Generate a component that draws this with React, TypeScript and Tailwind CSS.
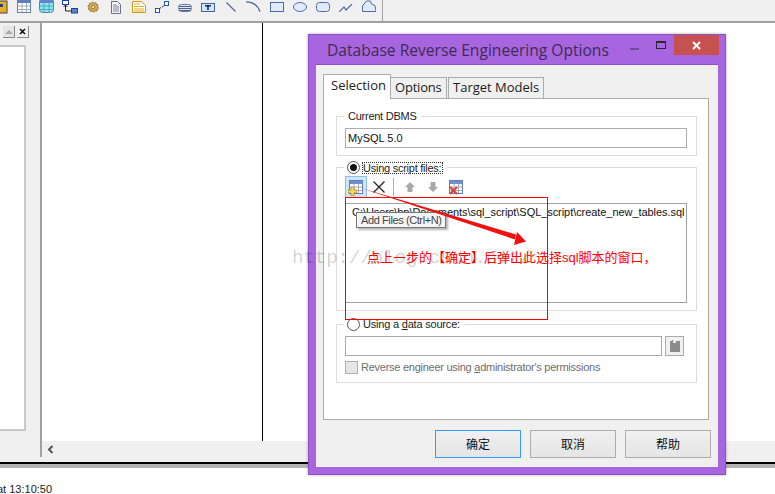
function TableIcon({ head = '#6f8fd0', fill = '#fff' }: { head?: string; fill?: string }) {
  return (
    <svg width="14" height="14" viewBox="0 0 14 14">
      <rect x="0.5" y="0.5" width="13" height="13" fill={fill} stroke="#5f7fb5" />
      <rect x="1" y="1" width="12" height="3" fill={head} />
      <path d="M1 7h12M1 10.500h12M5 4v9M9.500 4v9" stroke="#a8a8b8" />
    </svg>
  );
}

const slot = 'w-[23px] shrink-0 flex justify-center';

function ToolbarIcons() {
  return (
    <div className="flex items-start ml-[4px]">
      <div className={`${slot} pt-0`}>
        <svg width="14" height="13" viewBox="0 0 14 13">
          <rect x="0.500" y="-1" width="13" height="13.500" fill="#fff" stroke="#5f7fb5" />
          <rect x="1" y="0" width="12" height="3" fill="#5f7fc0" />
          <path d="M1 6h12M1 9.500h12M5 3v9M9.500 3v9" stroke="#a8a8b8" />
        </svg>
      </div>
      <div className={slot}>
        <svg width="15" height="13" viewBox="0 0 15 13">
          <rect x="0.500" y="-1" width="14" height="13.500" rx="3" fill="#8fe6ee" stroke="#5f7fb5" />
          <rect x="1" y="0" width="13" height="3" fill="#5f86cc" />
          <path d="M1 6h13M1 9.500h13M5 3v9M10 3v9" stroke="#4aa9c0" />
        </svg>
      </div>
      <div className={slot}>
        <svg width="16" height="14" viewBox="0 0 16 14">
          <rect x="0.500" y="0.500" width="6" height="4" fill="#fff" stroke="#1b3fb0" />
          <rect x="9.500" y="8.500" width="6" height="4.500" fill="#5f86cc" stroke="#1b3fb0" />
          <path d="M3.500 5v6h6M1.500 7l2-2 2 2" fill="none" stroke="#222" />
        </svg>
      </div>
      <div className={`${slot} pt-px`}>
        <svg width="12" height="12" viewBox="0 0 16 16">
          <path d="M8 1l1.600 2 2.400-.8.400 2.500 2.500.5-.9 2.400 1.600 1.900-2.200 1.300.2 2.500-2.500-.1L8.800 15 7 13.200 4.600 14l-.6-2.500-2.500-.6.9-2.400L1 6.600 3.200 5.400 3 2.900l2.500.1z" fill="#d8a84a" stroke="#8a6a30" />
          <circle cx="8" cy="8" r="2.200" fill="#f3e2b0" stroke="#8a6a30" />
        </svg>
      </div>
      <div className={`${slot} pt-px`}>
        <svg width="10" height="13" viewBox="0 0 10 13">
          <path d="M.5.500h6l3 3v9h-9z" fill="#f4f4f4" stroke="#66708a" />
          <path d="M2 4h4M2 6h6M2 8h6M2 10h6" stroke="#7a8398" />
        </svg>
      </div>
      <div className={`${slot} pt-px`}>
        <svg width="14" height="12" viewBox="0 0 14 12">
          <path d="M.5.500h9l4 4v7H.5z" fill="#fff" stroke="#c99a18" />
          <path d="M2 3h6M2 5.500h10M2 8h10M2 10h10" stroke="#e0ac14" />
        </svg>
      </div>
      <div className={`${slot} pt-px`}>
        <svg width="14" height="12" viewBox="0 0 14 12">
          <rect x="0.500" y="7.500" width="4" height="4" fill="#fff" stroke="#2b52b8" />
          <rect x="9.500" y="0.500" width="4" height="4" fill="#fff" stroke="#2b52b8" />
          <path d="M4.500 7.500l5-3" stroke="#333" strokeDasharray="2 1" />
        </svg>
      </div>
      <div className={`${slot} pt-[4px]`}>
        <svg width="14" height="8" viewBox="0 0 14 8">
          <rect x="0.500" y="0.500" width="13" height="7" rx="3" fill="#dfe6f4" stroke="#5f7fb5" />
          <path d="M1 2.500h12M1 4.500h12M1 6.500h12" stroke="#4f5f80" />
        </svg>
      </div>
      <div className={`${slot} pt-[3px]`}>
        <svg width="14" height="9" viewBox="0 0 14 9">
          <rect x="0.500" y="0.500" width="13" height="8" fill="#d6e4fb" stroke="#3a66b8" />
          <path d="M4 2h6v1.500H7.800V7H6.200V3.500H4z" fill="#1c2a4a" />
        </svg>
      </div>
      <div className={`${slot} pt-[2px]`}>
        <svg width="10" height="10" viewBox="0 0 10 10">
          <path d="M.5.500l9 9" stroke="#506a9c" strokeWidth="1.200" />
        </svg>
      </div>
      <div className={`${slot} pt-px`}>
        <svg width="15" height="11" viewBox="0 0 15 11">
          <path d="M0 .8c6 0 11.500 3 14 10" fill="none" stroke="#506a9c" strokeWidth="1.200" />
        </svg>
      </div>
      <div className={`${slot} pt-[2px]`}>
        <svg width="14" height="10" viewBox="0 0 14 10">
          <rect x="0.500" y="0.500" width="13" height="9" fill="#e2ebfb" stroke="#4a6db0" />
        </svg>
      </div>
      <div className={`${slot} pt-[2px]`}>
        <svg width="14" height="10" viewBox="0 0 14 10">
          <ellipse cx="7" cy="5" rx="6.500" ry="4.500" fill="#e2ebfb" stroke="#4a6db0" />
        </svg>
      </div>
      <div className={`${slot} pt-[2px]`}>
        <svg width="14" height="10" viewBox="0 0 14 10">
          <rect x="0.500" y="0.500" width="13" height="9" rx="3" fill="#e2ebfb" stroke="#4a6db0" />
        </svg>
      </div>
      <div className={`${slot} pt-[4px]`}>
        <svg width="14" height="8" viewBox="0 0 14 8">
          <path d="M0 8l5-5 2 3 6-6" fill="none" stroke="#4a6db0" strokeWidth="1.200" />
        </svg>
      </div>
      <div className={slot}>
        <svg width="14" height="12" viewBox="0 0 14 12">
          <path d="M.5 11.500V6l4-5h4l1 3 3.500 1.500 1 6z" fill="#e2ebfb" stroke="#4a6db0" />
        </svg>
      </div>
    </div>
  );
}

function Group({ legend, className, children }: { legend: React.ReactNode; className: string; children: React.ReactNode }) {
  return (
    <div className={`relative border border-[#dcdcdc] ml-[12px] mr-[11px] pl-[8px] pr-[9px] ${className}`}>
      <div className="absolute left-[7px] top-[-8px] bg-white px-[4px] h-[15px] leading-[15px] text-[11px] tracking-[-0.250px] text-[#222]">{legend}</div>
      {children}
    </div>
  );
}

function Radio({ checked }: { checked?: boolean }) {
  return (
    <span className="inline-flex items-center justify-center w-[13px] h-[13px] rounded-full border border-[#555] bg-white">
      {checked && <span className="w-[7px] h-[7px] rounded-full bg-[#111]" />}
    </span>
  );
}

function DialogButton({ label, active }: { label: string; active?: boolean }) {
  return (
    <div
      className={`w-[86px] h-[28px] flex items-center justify-center border text-[12px] text-[#111] bg-gradient-to-b from-[#f0f0f0] to-[#e5e5e5] ${
        active ? 'border-[#3399ff]' : 'border-[#acacac]'
      }`}
    >
      {label}
    </div>
  );
}

function Dialog() {
  return (
    <div className="absolute left-[308px] top-[34px] w-[418px] h-[441px] bg-[#a865e0] border border-[#8e50c4] flex flex-col shadow-[0_0_3px_rgba(0,0,0,0.3)]">
      <div className="h-[29px] shrink-0 relative">
        <div className="pl-[18px] pt-[3px] text-[15.600px] leading-[24px] text-[#3d2c52] [font-family:'Open_Sans',sans-serif] whitespace-nowrap">
          Database Reverse Engineering Options
        </div>
        <div className="absolute left-[321px] top-[13px] w-[9px] h-[2px] bg-[#6c4d94]" />
        <div className="absolute left-[347px] top-[6px] w-[10px] h-[8px] border border-[#2a2a2a] border-t-2" />
        <div className="absolute left-[365px] top-0 w-[45px] h-[20px] bg-[#c75050] flex items-center justify-center">
          <svg width="9" height="9" viewBox="0 0 9 9">
            <path d="M1 1l7 7M8 1l-7 7" stroke="#fff" strokeWidth="2" />
          </svg>
        </div>
      </div>

      <div className="mx-[7px] mb-[7px] flex-1 bg-[#f0f0f0] border-t border-[#8e50c4] px-[7px] pt-[9px] flex flex-col">
        <div className="flex items-end h-[25px] text-[13px] text-[#222] [font-family:'Open_Sans',sans-serif] relative z-10">
          <div className="w-[68px] h-[25px] bg-white border border-[#acacac] border-b-0 pl-[7px] leading-[20px]">Selection</div>
          <div className="w-[56px] h-[22px] bg-[#f0f0f0] border border-[#acacac] border-l-0 pl-[4px] leading-[19px] tracking-[-0.200px]">Options</div>
          <div className="w-[96px] h-[22px] ml-px bg-[#f0f0f0] border border-[#acacac] pl-[4px] leading-[19px]">Target Models</div>
        </div>

        <div className="mt-[-1px] h-[322px] w-[386px] bg-white border border-[#acacac] pt-[17px]">
          <Group legend="Current DBMS" className="h-[40px] pt-[11px]">
            <div className="h-[20px] border border-[#acacac] bg-white pl-[2px] leading-[18px] text-[11px] text-[#111]">MySQL 5.0</div>
          </Group>

          <Group
            legend={
              <span className="flex items-center gap-[2px] ml-[-1px] h-[15px]">
                <Radio checked />
                <span className="border border-dotted border-[#333] leading-[10px] pr-px">Using script files:</span>
              </span>
            }
            className="mt-[11px] h-[144px]"
          >
            <div className="h-[22px] mt-[8px] flex items-center">
              <div className="w-[22px] h-[22px] bg-[#cfe5f9] border border-[#8cc0ea] flex items-center justify-center relative">
                <TableIcon />
                <svg width="9" height="9" viewBox="0 0 9 9" className="absolute left-[2px] bottom-[1px]">
                  <path d="M3 0h3v3h3v3H6v3H3V6H0V3h3z" fill="#f7d858" stroke="#8c7a20" strokeWidth="0.600" />
                </svg>
              </div>
              <svg width="12" height="12" viewBox="0 0 12 12" className="ml-[6px]">
                <path d="M.5.500l11 11M11.500.500l-11 11" stroke="#222" strokeWidth="1.300" />
              </svg>
              <div className="w-px h-[18px] bg-[#b0b0b0] ml-[8px]" />
              <svg width="10" height="10" viewBox="0 0 10 10" className="ml-[11px]">
                <path d="M5 0l5 5H7.500v5h-5V5H0z" fill="#a8a8a8" />
              </svg>
              <svg width="10" height="10" viewBox="0 0 10 10" className="ml-[13px]">
                <path d="M2.500 0h5v5H10l-5 5-5-5h2.500z" fill="#a8a8a8" />
              </svg>
              <div className="relative ml-[11px]">
                <TableIcon />
                <svg width="9" height="9" viewBox="0 0 9 9" className="absolute left-0 bottom-[-1px]">
                  <path d="M1 1l7 7M8 1L1 8" stroke="#d84030" strokeWidth="2" />
                </svg>
              </div>
            </div>
            <div className="mt-[5px] h-[100px] border border-[#a0a0a8] bg-white pl-[6px] pt-px text-[11px] tracking-[-0.060px] leading-[15px] text-[#111] whitespace-nowrap">
              C:\Users\hp\Documents\sql_script\SQL_script\create_new_tables.sql
            </div>
          </Group>

          <Group
            legend={
              <span className="flex items-center gap-[3px] ml-[-1px] tracking-[-0.200px]">
                <Radio />
                <span>
                  Using a <span className="underline">d</span>ata source:
                </span>
              </span>
            }
            className="mt-[13px] h-[59px]"
          >
            <div className="flex items-center mt-[11px]">
              <div className="w-[317px] h-[20px] border border-[#a8a8b0] bg-white" />
              <div className="w-[19px] h-[20px] ml-[3px] border border-[#acacac] bg-[#f0f0f0] flex items-center justify-center">
                <svg width="12" height="14" viewBox="0 0 12 14">
                  <path d="M1 2h2V1h3v1h5v11H1z" fill="#8c8c8c" />
                  <path d="M4 1h3v3H4z" fill="#e8e8e8" />
                </svg>
              </div>
            </div>
            <div className="flex items-center mt-[5px] text-[11px] leading-[13px] tracking-[-0.260px] text-[#6d6d6d]">
              <div className="w-[13px] h-[13px] border border-[#b0b0b0] bg-[#e6e6e6]" />
              <span className="ml-[3px] whitespace-nowrap">
                Reverse engineer using <span className="underline">a</span>dministrator's permissions
              </span>
            </div>
          </Group>
        </div>

        <div className="flex gap-[9px] ml-[112px] mt-[10px] [font-family:'Noto_Sans_CJK_SC',sans-serif]">
          <DialogButton label="确定" active />
          <DialogButton label="取消" />
          <DialogButton label="帮助" />
        </div>
      </div>
    </div>
  );
}

export default function App() {
  return (
    <div className="relative w-[775px] h-[494px] overflow-hidden bg-white [font-family:'Liberation_Sans','Noto_Sans_CJK_SC',sans-serif]">
      <div className="h-[23px] bg-[#f0f0f0] border-b-2 border-[#a0a0a0] flex relative">
        <svg width="8" height="14" viewBox="0 0 8 14" className="shrink-0">
          <rect x="-6" y="1" width="13" height="12" fill="#e8b020" stroke="#444" />
          <rect x="0" y="4" width="3" height="3" fill="#2040a0" />
        </svg>
        <ToolbarIcons />
        <div className="absolute left-[382px] top-0 w-px h-[21px] bg-[#a0a0a0]" />
      </div>

      <div className="flex h-[418px]">
        <div className="w-[42px] shrink-0 bg-[#f0f0f0] border-r-2 border-[#a0a0a0] pt-[3px]">
          <div className="flex gap-[2px] justify-end pr-[11px]">
            <div className="w-[12px] h-[12px] bg-[#e4e4e4] border-b border-r border-[#888] flex items-center justify-center">
              <span className="w-0 h-0 border-x-[4px] border-x-transparent border-b-[4px] border-b-[#aaa]" />
            </div>
            <div className="w-[12px] h-[12px] bg-[#f0f0f0] border-b border-r border-[#888] flex items-center justify-center">
              <svg width="7" height="7" viewBox="0 0 7 7">
                <path d="M1 1l5 5M6 1L1 6" stroke="#111" strokeWidth="1.600" />
              </svg>
            </div>
          </div>
          <div className="mt-[7px] w-[26px] h-[386px] bg-white border-t-2 border-r-2 border-b-2 border-[#c8c8c8]" />
        </div>
        <div className="w-[221px] shrink-0 bg-white border-r border-black" />
        <div className="flex-1 bg-white" />
      </div>

      <div className="flex h-[21px] bg-[#f0f0f0]">
        <div className="w-[42px] h-[16px] border-r-2 border-[#a0a0a0]" />
        <div className="h-[16px] flex-1 flex items-center pl-[5px]">
          <svg width="7" height="9" viewBox="0 0 7 9">
            <path d="M5.500 1L2 4.500 5.500 8" fill="none" stroke="#555" strokeWidth="2" />
          </svg>
        </div>
      </div>
      <div className="h-[2px] bg-black" />
      <div className="h-[4px] bg-[#b4b4b4]" />

      <div className="pt-[14px] ml-[-3px] text-[11px] leading-[14px] text-[#222]">at 13:10:50</div>

      <Dialog />

      {/* annotations pasted over the screenshot */}
      <div className="absolute left-[356px] top-[212px] w-[90px] h-[16px] bg-[#f5f5f5] border border-[#777] shadow-[2px_2px_2px_rgba(0,0,0,0.3)] text-[11px] tracking-[-0.400px] leading-[14px] pl-[4px] text-[#444] whitespace-nowrap">
        Add Files (Ctrl+N)
      </div>
      <div className="absolute left-[345px] top-[197px] w-[203px] h-[123px] border border-[#ff0000]" />
      <div className="absolute left-[292px] top-[245px] text-[19px] leading-[26px] text-[#00000030] whitespace-nowrap [font-family:'Liberation_Mono',monospace]">
        http://blog.csdn.net/
      </div>
      <div className="absolute left-[367px] top-[250px] text-[13px] leading-[16px] text-[#ff0000] whitespace-nowrap">
        点上一步的【确定】后弹出此选择sql脚本的窗口，
      </div>
      <svg className="absolute left-[356px] top-[185px]" width="172" height="62" viewBox="0 0 172 62">
        <path d="M2 2L160 49.500L159 54.500z" fill="#f01010" />
        <path d="M170 56.500L158 60L161 47z" fill="#f01010" />
      </svg>
    </div>
  );
}
